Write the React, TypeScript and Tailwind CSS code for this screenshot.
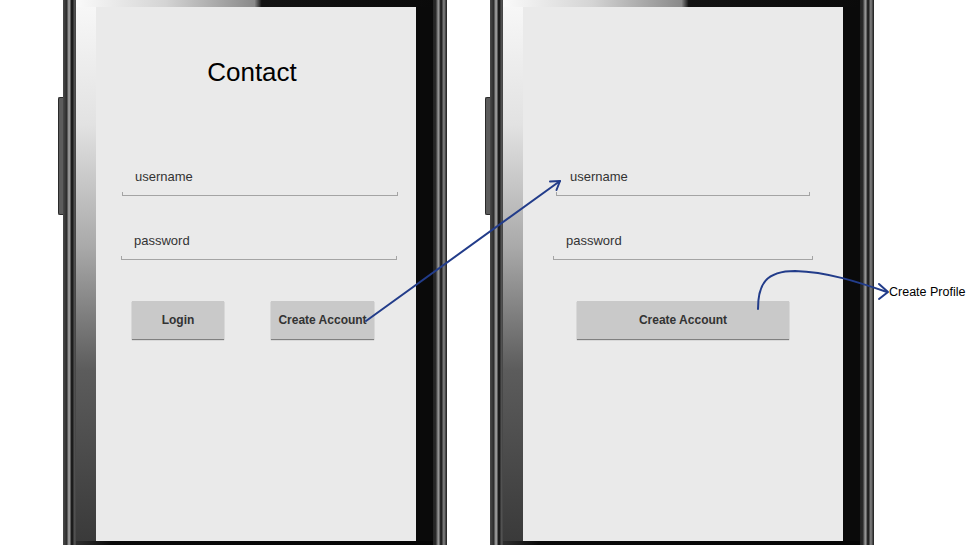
import React from "react"

const font = { fontFamily: '"Liberation Sans", Arial, sans-serif' }

const Field = ({ label, lineLeft, lineWidth, textLeft, top }: { label: string; lineLeft: number; lineWidth: number; textLeft: number; top: string }) => {
    return (
        <div className={`flex flex-col ${top}`} style={{ marginLeft: lineLeft, width: lineWidth }}>
            <div className="text-[13px] leading-[16px] text-[#333]" style={{ paddingLeft: textLeft - lineLeft }}>
                {label}
            </div>
            <div className="mt-[7px] h-[4px] border-b border-l border-r border-[#a4a4a4]" />
        </div>
    )
}

const Button = ({ label, w }: { label: string; w: string }) => (
    <div className={`${w} h-[38px] flex items-center justify-center bg-[#c9c9c9] shadow-[0_1px_1px_rgba(0,0,0,0.45)] text-[12px] font-bold text-[#333]`}>
        {label}
    </div>
)

const Phone = ({ children }: { children: React.ReactNode }) => {
    return (
        <div className="flex items-start shrink-0">
            {/* side key */}
            <div className="w-[5px] h-[118px] mt-[97px] rounded-l-[2px] bg-[#5c5c5c] border border-r-0 border-[#2a2a2a]" />
            <div className="flex h-[545px]">
                {/* left rim */}
                <div className="w-[13px] h-full bg-[linear-gradient(to_right,#4a4a4a_0px,#2a2a2a_4px,#8c8c8c_5px,#9a9a9a_7px,#1c1c1c_8px,#1c1c1c_10px,#555_11px,#444_13px)]" />
                {/* inner body */}
                <div className="w-[357px] h-full flex flex-col bg-[#0a0a0a]">
                    <div className="h-[7px] bg-[linear-gradient(to_right,#fafafa_0%,#d4d4d4_25%,#8a8a8a_50%,#141414_52%,#0a0a0a_100%)]" />
                    <div className="flex h-[534px]">
                        <div className="w-[20px] h-full bg-[linear-gradient(to_bottom,#f7f7f7_0%,#e2e2e2_22%,#a9a9a9_45%,#5c5c5c_68%,#3a3a3a_100%)]" />
                        <div className="w-[320px] h-full bg-[#eaeaea] flex flex-col">
                            {children}
                        </div>
                        <div className="w-[17px] h-full bg-[#0a0a0a]" />
                    </div>
                    <div className="h-[4px] bg-[linear-gradient(to_right,#2e2e2e_0%,#0a0a0a_10%,#050505_100%)]" />
                </div>
                {/* right rim */}
                <div className="w-[14px] h-full bg-[linear-gradient(to_right,#222_0px,#2a2a2a_3px,#6a6a6a_4px,#a0a0a0_6px,#2a2a2a_7px,#1e1e1e_9px,#7a7a7a_10px,#6a6a6a_12px,#2a2a2a_13px)]" />
            </div>
        </div>
    )
}

export default function App() {
    return (
        <div className="relative w-[977px] h-[545px] bg-white overflow-hidden flex pl-[58px] gap-[38px]" style={font}>
            {/* login screen */}
            <Phone>
                <div className="mt-[50px] text-center text-[26px] leading-[30px] text-black pr-[8px]">Contact</div>
                <Field label="username" lineLeft={26} lineWidth={276} textLeft={39} top="mt-[82px]" />
                <Field label="password" lineLeft={25} lineWidth={276} textLeft={38} top="mt-[37px]" />
                <div className="mt-[41px] flex pl-[36px] gap-[47px]">
                    <Button label="Login" w="w-[92px]" />
                    <Button label="Create Account" w="w-[103px]" />
                </div>
            </Phone>

            {/* create account screen */}
            <Phone>
                <Field label="username" lineLeft={33} lineWidth={254} textLeft={47} top="mt-[162px]" />
                <Field label="password" lineLeft={30} lineWidth={260} textLeft={43} top="mt-[37px]" />
                <div className="mt-[41px] flex pl-[54px]">
                    <Button label="Create Account" w="w-[212px]" />
                </div>
            </Phone>

            {/* flow arrows */}
            <svg className="absolute inset-0 pointer-events-none" width="977" height="545" viewBox="0 0 977 545" fill="none">
                <g stroke="#223c8a" strokeWidth="2" strokeLinecap="round" strokeLinejoin="round">
                    <path d="M366 321 L560 181" />
                    <path d="M550 181.5 L560 181 L556.5 190" />
                    <path d="M758 309 C758 284 766 271 795 271 C828 272 858 282 887 292" />
                    <path d="M879 284 L888 292 L879 299" />
                </g>
            </svg>
            <div className="absolute left-[889px] top-[285px] text-[12.5px] leading-[15px] text-black">Create Profile</div>
        </div>
    )
}
